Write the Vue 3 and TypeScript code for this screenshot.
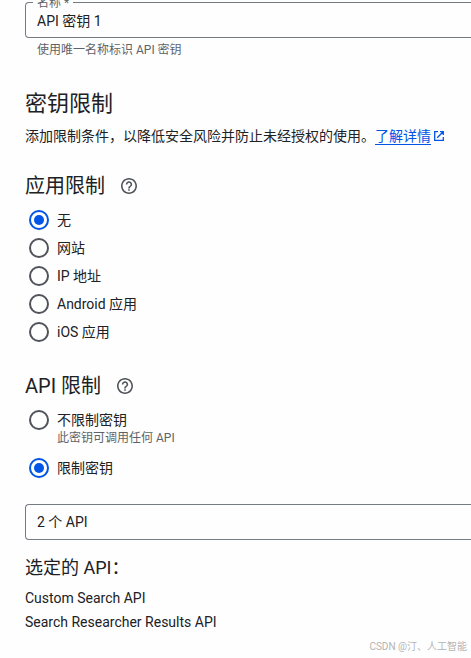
<script setup lang="ts">
import { ref } from 'vue'

interface Option {
  value: string
  label: string
  description?: string
}

const keyName = ref('API 密钥 1')
const appRestriction = ref('none')
const apiRestriction = ref('restricted')
const apiSelection = ref('2 个 API')

const appOptions: Option[] = [
  { value: 'none', label: '无' },
  { value: 'web', label: '网站' },
  { value: 'ip', label: 'IP 地址' },
  { value: 'android', label: 'Android 应用' },
  { value: 'ios', label: 'iOS 应用' },
]

const apiOptions: Option[] = [
  { value: 'open', label: '不限制密钥', description: '此密钥可调用任何 API' },
  { value: 'restricted', label: '限制密钥' },
]

const selectedApis = ['Custom Search API', 'Search Researcher Results API']
</script>

<template>
  <main class="page">
    <div class="field">
      <label class="field-label" for="key-name">名称 *</label>
      <input id="key-name" v-model="keyName" class="box" type="text" />
    </div>
    <p class="hint">使用唯一名称标识 API 密钥</p>

    <h2 class="title">密钥限制</h2>
    <p class="intro">
      添加限制条件，以降低安全风险并防止未经授权的使用。<a class="link" href="#"><span class="link-text">了解详情</span><svg class="link-icon" viewBox="0 0 12 12" aria-hidden="true"><path d="M5 1.7H1.7v8.6h8.6V7M7 1.7h3.3V5M10.2 1.8L4.2 7.8" /></svg></a>
    </p>

    <section>
      <div class="heading-row">
        <h3 id="app-heading" class="heading">应用限制</h3>
        <button class="help" type="button" aria-labelledby="app-heading">
          <svg viewBox="2 2 20 20" aria-hidden="true"><path d="M11 18h2v-2h-2v2zm1-16C6.48 2 2 6.48 2 12s4.48 10 10 10 10-4.48 10-10S17.52 2 12 2zm0 18c-4.41 0-8-3.59-8-8s3.59-8 8-8 8 3.59 8 8-3.59 8-8 8zm0-14c-2.21 0-4 1.79-4 4h2c0-1.1.9-2 2-2s2 .9 2 2c0 2-3 1.75-3 5h2c0-2.25 3-2.5 3-5 0-2.21-1.79-4-4-4z" /></svg>
        </button>
      </div>
      <div class="options" role="radiogroup" aria-labelledby="app-heading">
        <label v-for="o in appOptions" :key="o.value" class="option">
          <input v-model="appRestriction" class="radio" type="radio" name="app" :value="o.value" />
          <span class="option-label">{{ o.label }}</span>
        </label>
      </div>
    </section>

    <section>
      <div class="heading-row">
        <h3 id="api-heading" class="heading">API 限制</h3>
        <button class="help" type="button" aria-labelledby="api-heading">
          <svg viewBox="2 2 20 20" aria-hidden="true"><path d="M11 18h2v-2h-2v2zm1-16C6.48 2 2 6.48 2 12s4.48 10 10 10 10-4.48 10-10S17.52 2 12 2zm0 18c-4.41 0-8-3.59-8-8s3.59-8 8-8 8 3.59 8 8-3.59 8-8 8zm0-14c-2.21 0-4 1.79-4 4h2c0-1.1.9-2 2-2s2 .9 2 2c0 2-3 1.75-3 5h2c0-2.25 3-2.5 3-5 0-2.21-1.79-4-4-4z" /></svg>
        </button>
      </div>
      <div class="options api-options" role="radiogroup" aria-labelledby="api-heading">
        <label v-for="o in apiOptions" :key="o.value" class="option">
          <input v-model="apiRestriction" class="radio" type="radio" name="api" :value="o.value" />
          <span class="option-label">
            {{ o.label }}
            <span v-if="o.description" class="description">{{ o.description }}</span>
          </span>
        </label>
      </div>
    </section>

    <select v-model="apiSelection" class="box api-select" aria-labelledby="api-heading">
      <option>2 个 API</option>
    </select>

    <h4 class="subheading">选定的 API：</h4>
    <ul class="apis">
      <li v-for="api in selectedApis" :key="api">{{ api }}</li>
    </ul>

    <span class="watermark">CSDN @汀、人工智能</span>
  </main>
</template>

<style>
body {
  background: #fefefe;
}
</style>

<style scoped>
.page {
  box-sizing: border-box;
  position: relative;
  min-height: 100vh;
  padding: 2px 0 24px 25px;
  overflow: hidden;
  color: #202124;
  font: 400 14px/20px Roboto, "Noto Sans CJK SC", sans-serif;
}

h2,
h3,
h4,
p,
ul {
  margin: 0;
  padding: 0;
  font-weight: 400;
}

.field {
  position: relative;
}

.field-label {
  position: absolute;
  top: -7px;
  left: 8px;
  padding: 0 4px;
  background: #fefefe;
  color: #5f6368;
  font-size: 12px;
  line-height: 16px;
}

.box {
  display: block;
  box-sizing: border-box;
  width: 100%;
  height: 36px;
  margin: 0;
  padding: 0 11px;
  border: 1px solid #747b83;
  border-right: 0;
  border-radius: 4px 0 0 4px;
  outline: 0;
  appearance: none;
  background: transparent;
  color: inherit;
  font: inherit;
}

.hint {
  margin: 4px 0 0 12px;
  color: #5f6368;
  font-size: 12px;
  line-height: 16px;
}

.title {
  margin-top: 32px;
  font-size: 22px;
  line-height: 28px;
}

.intro {
  margin-top: 8px;
  white-space: nowrap;
}

.link {
  color: #0054e6;
  text-decoration: none;
}

.link-text {
  border-bottom: 1px solid #0054e6;
}

.link-icon {
  width: 12px;
  height: 12px;
  margin-left: 2px;
  vertical-align: -1px;
  fill: none;
  stroke: #0054e6;
  stroke-width: 1.3;
}

.heading-row {
  display: flex;
  align-items: center;
  gap: 16px;
  margin-top: 28px;
}

.heading {
  font-size: 20px;
  line-height: 24px;
}

.help {
  display: flex;
  padding: 0;
  border: 0;
  background: none;
}

.help svg {
  width: 16px;
  height: 16px;
  fill: #50545a;
}

.options {
  display: flex;
  flex-direction: column;
  margin-top: 8px;
  padding-left: 4px;
}

.option {
  display: flex;
  align-items: flex-start;
  gap: 8px;
  padding: 4px 0;
}

.api-options {
  gap: 4px;
}

.radio {
  flex: none;
  display: grid;
  place-items: center;
  box-sizing: border-box;
  width: 20px;
  height: 20px;
  margin: 0;
  border: 2px solid #50545a;
  border-radius: 50%;
  appearance: none;
}

.radio:checked {
  border-color: #0054e6;
}

.radio:checked::before {
  content: "";
  width: 10px;
  height: 10px;
  border-radius: 50%;
  background: #0054e6;
}

.description {
  display: block;
  color: #5f6368;
  font-size: 12px;
  line-height: 16px;
}

.api-select {
  margin-top: 22px;
}

.subheading {
  margin-top: 16px;
  font-size: 18px;
  line-height: 24px;
}

.apis {
  margin-top: 6px;
  line-height: 24px;
  list-style: none;
}

.watermark {
  position: absolute;
  right: 4px;
  bottom: 4px;
  color: #b4b4b4;
  font: 10px/14px Roboto, "Noto Sans CJK SC", sans-serif;
}
</style>
